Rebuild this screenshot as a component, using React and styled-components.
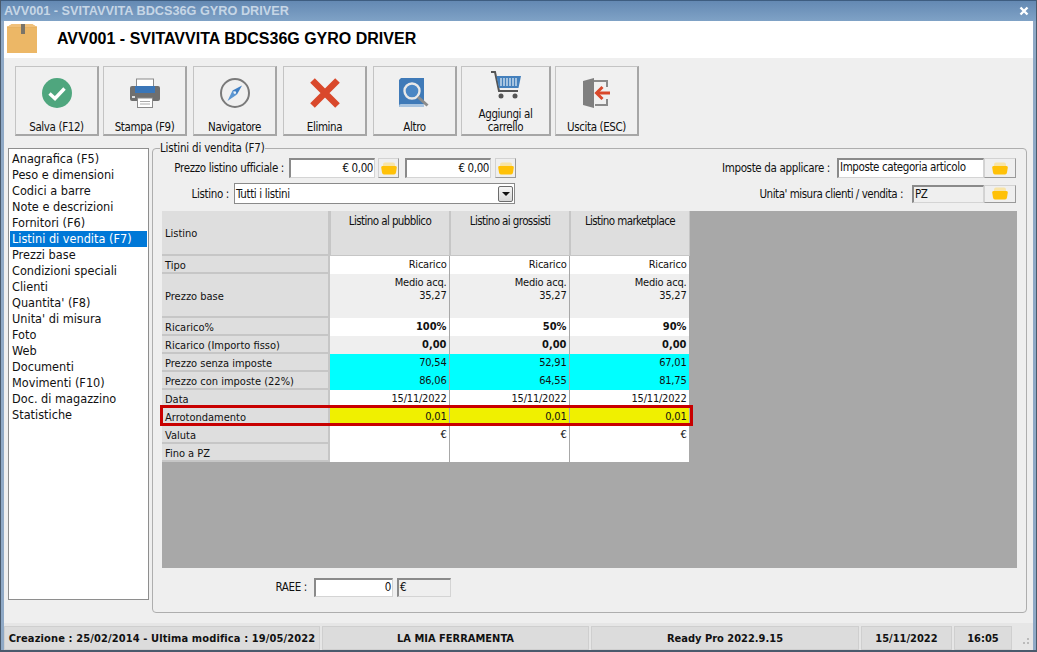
import React from "react";
import styled, { createGlobalStyle } from "styled-components";

const Global = createGlobalStyle`
  html, body { margin: 0; padding: 0; background: #efefef; }
  body { font-family: "DejaVu Sans Condensed", "DejaVu Sans", sans-serif; font-size: 11px; color: #111; }
`;

const FONT_BOLD = `"Liberation Sans", Arial, sans-serif`;

const Win = styled.div`
  width: 1037px;
  height: 652px;
  box-sizing: border-box;
  display: flex;
  flex-direction: column;
  background: #efefef;
  border: 1px solid #4a5a6c;
  border-top: none;
  border-bottom-width: 2px;
  overflow: hidden;
`;

const Shell = styled.div`
  flex: 1;
  min-height: 0;
  display: flex;
  flex-direction: column;
  background: #efefef;
  border-left: 3px solid #8fa9c6;
  border-right: 3px solid #8fa9c6;
`;

const TitleBar = styled.div`
  height: 21px;
  flex: none;
  margin: 0 -3px;
  padding: 0 4px 0 3px;
  display: flex;
  align-items: center;
  justify-content: space-between;
  background: linear-gradient(#6489b3, #7fa2c6);
  border-top: 1px solid #3e5d80;
  box-sizing: border-box;
  color: #c6d6e6;
  font: bold 12.7px ${FONT_BOLD};
`;

const CloseBtn = styled.span`
  width: 10px;
  height: 10px;
  margin-right: 3px;
  display: flex;
`;

const Header = styled.div`
  height: 37px;
  flex: none;
  display: flex;
  align-items: center;
  background: #fff;
  padding: 0 0 2px 3px;
  box-sizing: border-box;
  gap: 20px;
  font: bold 16px ${FONT_BOLD};
  color: #000;
`;

const BoxIcon = styled.svg`
  width: 30px;
  height: 33px;
  flex: none;
  align-self: flex-start;
`;

const Toolbar = styled.div`
  flex: none;
  display: flex;
  padding: 8px 0 0 11px;
  height: 70px;
`;

const ToolBtn = styled.div`
  width: ${(p) => p.$w || 84}px;
  height: 70px;
  margin-right: ${(p) => p.$gap}px;
  box-sizing: border-box;
  background: #f0f0f0;
  border: 1px solid #c4c4c4;
  border-bottom: 2px solid #a6a6a6;
  border-right: 2px solid #a6a6a6;
  display: flex;
  flex-direction: column;
  align-items: center;
  position: relative;
`;

const ToolIcon = styled.svg`
  width: 32px;
  height: 32px;
  margin-top: ${(p) => p.$top ?? 10}px;
  flex: none;
`;

const ToolLabel = styled.div`
  position: absolute;
  left: 0;
  right: 0;
  bottom: 0;
  text-align: center;
  line-height: 13px;
  font-size: 11.5px;
  letter-spacing: -0.38px;
`;

const Content = styled.div`
  flex: 1;
  display: flex;
  min-height: 0;
  padding: 5px 6px 0 4px;
  gap: 3px;
`;

const SideList = styled.div`
  width: 141px;
  height: 452px;
  margin-top: 7px;
  box-sizing: border-box;
  flex: none;
  background: #fff;
  border: 1px solid #8e8e8e;
  padding: 2px 1px;
  font-size: 12.6px;
`;

const SideItem = styled.div`
  height: 16px;
  line-height: 16px;
  padding-left: 2px;
  background: ${(p) => (p.$active ? "#0078d7" : "transparent")};
  color: ${(p) => (p.$active ? "#fff" : "#111")};
`;

const Group = styled.fieldset`
  flex: 1;
  margin: 0;
  height: 472px;
  box-sizing: border-box;
  border: 1px solid #aeaeae;
  border-radius: 4px;
  padding: 0 9px 0 9px;
  min-width: 0;
`;

const Legend = styled.legend`
  padding: 0;
  margin-left: -2px;
  font-size: 11.5px;
  line-height: 14px;
  letter-spacing: -0.2px;
`;

const FormRow = styled.div`
  display: flex;
  align-items: center;
  height: ${(p) => p.$h}px;
  margin-top: ${(p) => p.$top || 0}px;
`;

const FormLabel = styled.div`
  width: ${(p) => p.$w}px;
  text-align: right;
  flex: none;
  padding-right: ${(p) => p.$pad || 5}px;
  box-sizing: border-box;
  font-size: 11.5px;
  letter-spacing: ${(p) => p.$ls ?? -0.35}px;
  white-space: nowrap;
`;

const Input = styled.div`
  width: ${(p) => p.$w}px;
  height: ${(p) => p.$h || 20}px;
  flex: none;
  box-sizing: border-box;
  background: ${(p) => (p.$off ? "#efefef" : "#fff")};
  border: 2px solid #d4d4d4;
  border-top-color: #8a8a8a;
  border-left-color: #8a8a8a;
  border-bottom-width: 1px;
  border-right-width: 1px;
  text-align: ${(p) => (p.$left ? "left" : "right")};
  padding: 0 1px;
  line-height: ${(p) => p.$lh || 16}px;
  font-size: 11.5px;
  letter-spacing: -0.4px;
  margin-left: ${(p) => p.$ml || 0}px;
  overflow: hidden;
  white-space: nowrap;
`;

const FolderBtn = styled.div`
  width: ${(p) => p.$w || 21}px;
  height: ${(p) => p.$h || 20}px;
  flex: none;
  box-sizing: border-box;
  background: #efefef;
  border: 1px solid #d2d2d2;
  border-right: 1px solid #9a9a9a;
  border-bottom: 1px solid #9a9a9a;
  margin-left: ${(p) => p.$ml || 0}px;
  display: flex;
  align-items: center;
  justify-content: center;
`;

const Select = styled.div`
  width: 281px;
  height: 21px;
  flex: none;
  box-sizing: border-box;
  background: #fff;
  border: 1px solid #8a8a8a;
  display: flex;
  align-items: center;
  justify-content: space-between;
  padding: 0 1px;
  font-size: 11.5px;
  letter-spacing: -0.35px;
`;

const ArrowBtn = styled.div`
  width: 15px;
  height: 16px;
  box-sizing: border-box;
  background: linear-gradient(#f6f6f6, #d8d8d8);
  border: 1px solid #6c6c6c;
  border-radius: 2px;
  display: flex;
  align-items: center;
  justify-content: center;
  &::after {
    content: "";
    border-left: 4px solid transparent;
    border-right: 4px solid transparent;
    border-top: 4px solid #111;
  }
`;

const GridArea = styled.div`
  margin-top: 7px;
  height: 357px;
  background: #a8a8a8;
  position: relative;
`;

const Table = styled.div`
  width: 528px;
  display: grid;
  grid-template-columns: 168px 120px 120px 120px;
  grid-template-rows: 45px 18px 44px repeat(8, 18px);
`;

const LabelCell = styled.div`
  box-sizing: border-box;
  background: #dedede;
  border-bottom: 2px solid #c6c6c6;
  border-right: 2px solid #c6c6c6;
  padding: 2px 0 0 3px;
  display: flex;
  align-items: center;
  font-size: 11px;
`;

const HeadCell = styled.div`
  box-sizing: border-box;
  background: #dedede;
  border-bottom: 1px solid #c6c6c6;
  border-left: 1px solid #c6c6c6;
  border-right: 1px solid #c6c6c6;
  text-align: center;
  padding-top: 3px;
  line-height: 14px;
  font-size: 11.5px;
  letter-spacing: -0.6px;
`;

const DataCell = styled.div`
  box-sizing: border-box;
  background: ${(p) => p.$bg};
  border-right: 1px solid #a8a8a8;
  text-align: right;
  padding: 2px 2.500px 0 0;
  line-height: 13px;
  font-size: 11px;
  letter-spacing: ${(p) => (p.$bold ? "0" : "-0.2px")};
  font-weight: ${(p) => (p.$bold ? "bold" : "normal")};
  white-space: pre-line;
`;

const RedMark = styled.div`
  position: absolute;
  left: -2px;
  top: 194px;
  width: 533px;
  height: 21px;
  box-sizing: border-box;
  border: 3px solid #c80000;
  pointer-events: none;
`;

const RaeeRow = styled.div`
  display: flex;
  align-items: center;
  height: 20px;
  margin-top: 9px;
  padding-left: 100px;
`;

const StatusBar = styled.div`
  flex: none;
  height: 27px;
  margin-top: 9px;
  display: flex;
  gap: 2px;
  background: #e6e6e6;
  padding-top: 3px;
  box-sizing: border-box;
`;

const StatusCell = styled.div`
  width: ${(p) => p.$w}px;
  box-sizing: border-box;
  background: #dcdcdc;
  border: 1px solid #cfcfcf;
  display: flex;
  align-items: center;
  justify-content: center;
  font-size: 11px;
  font-weight: bold;
  white-space: nowrap;
  letter-spacing: ${(p) => p.$ls || 0}px;
`;

const Grip = styled.svg`
  width: 10px;
  height: 10px;
  margin: 11px 0 0 6px;
`;

const Folder = () => (
  <svg width="16" height="13" viewBox="0 0 16 13">
    <path d="M2 2.500Q2 .5 4 .5h8q2 0 2 2V5H2z" fill="#f8e4a6" />
    <path d="M1.500 4h13q1.500 0 1.300 1.500l-.8 5q-.3 2-2 2H3q-1.700 0-2-2l-.8-5Q0 4 1.500 4z" fill="#ffc107" />
  </svg>
);

const lists = [
  "Anagrafica (F5)", "Peso e dimensioni", "Codici a barre", "Note e descrizioni", "Fornitori (F6)",
  "Listini di vendita (F7)", "Prezzi base", "Condizioni speciali", "Clienti", "Quantita' (F8)",
  "Unita' di misura", "Foto", "Web", "Documenti", "Movimenti (F10)", "Doc. di magazzino", "Statistiche",
];

const W = "#fff", G = "#efefef", C = "#00ffff", Y = "#f0f000";

const rows = [
  { label: "Tipo", bg: W, vals: ["Ricarico", "Ricarico", "Ricarico"] },
  { label: "Prezzo base", bg: G, vals: ["Medio acq.\n35,27", "Medio acq.\n35,27", "Medio acq.\n35,27"] },
  { label: "Ricarico%", bg: W, bold: true, vals: ["100%", "50%", "90%"] },
  { label: "Ricarico (Importo fisso)", bg: G, bold: true, vals: ["0,00", "0,00", "0,00"] },
  { label: "Prezzo senza imposte", bg: C, vals: ["70,54", "52,91", "67,01"] },
  { label: "Prezzo con imposte (22%)", bg: C, vals: ["86,06", "64,55", "81,75"] },
  { label: "Data", bg: W, vals: ["15/11/2022", "15/11/2022", "15/11/2022"] },
  { label: "Arrotondamento", bg: Y, vals: ["0,01", "0,01", "0,01"] },
  { label: "Valuta", bg: W, vals: ["€", "€", "€"] },
  { label: "Fino a PZ", bg: W, vals: ["", "", ""] },
];

export default function App() {
  return (
    <>
      <Global />
      <Win>
        <Shell>
          <TitleBar>
            <span>AVV001 - SVITAVVITA BDCS36G GYRO DRIVER</span>
            <CloseBtn>
              <svg width="10" height="10" viewBox="0 0 10 10">
                <path d="M1.500 1.500l7 7M8.500 1.500l-7 7" stroke="#fff" strokeWidth="2.400" />
              </svg>
            </CloseBtn>
          </TitleBar>
          <Header>
            <BoxIcon viewBox="0 0 30 33">
              <path d="M0 6l5-3h20l5 3v26H0z" fill="#ecb766" />
              <path d="M0 6h30" stroke="#e2ad5e" strokeWidth="1" />
              <path d="M5 3h20l5 3H0z" fill="#f0c07a" />
              <rect x="14" y="3" width="4" height="10" fill="#7a7468" />
            </BoxIcon>
            <span>AVV001 - SVITAVVITA BDCS36G GYRO DRIVER</span>
          </Header>
          <Toolbar>
            <ToolBtn $gap={4}>
              <ToolIcon viewBox="0 0 32 32">
                <circle cx="16" cy="16" r="15" fill="#4fa67e" />
                <path d="M8.500 16.500l5.500 5 9.500-10" fill="none" stroke="#fff" strokeWidth="3.400" />
              </ToolIcon>
              <ToolLabel>Salva (F12)</ToolLabel>
            </ToolBtn>
            <ToolBtn $gap={6}>
              <ToolIcon viewBox="0 0 32 32">
                <rect x="7.500" y="2" width="17" height="9" fill="#fff" stroke="#8a8a8a" />
                <path d="M3 9h26q2 0 2 2v11q0 2-2 2H3q-2 0-2-2V11q0-2 2-2z" fill="#6f6f6f" />
                <rect x="6" y="9" width="20" height="7" fill="#3a76b8" />
                <rect x="3" y="19" width="3" height="2" fill="#ddd" />
                <rect x="8.500" y="21" width="15" height="9.500" fill="#fff" stroke="#8a8a8a" />
                <path d="M11 24.500h10M11 27h10" stroke="#aaa" />
              </ToolIcon>
              <ToolLabel>Stampa (F9)</ToolLabel>
            </ToolBtn>
            <ToolBtn $gap={6}>
              <ToolIcon viewBox="0 0 32 32">
                <circle cx="16" cy="16" r="14" fill="#f0f0f0" stroke="#7a7a7a" strokeWidth="2" />
                <path d="M23 8.500l-9.500 5 4.500 4z" fill="#3f7fc4" />
                <path d="M8.500 24l5-10.500 4.500 4z" fill="#5c96d2" />
                <circle cx="15.800" cy="15.600" r="1.300" fill="#e8f0f8" />
              </ToolIcon>
              <ToolLabel>Navigatore</ToolLabel>
            </ToolBtn>
            <ToolBtn $gap={6}>
              <ToolIcon viewBox="0 0 32 32">
                <path d="M3.500 3.500l25 25M28.500 3.500l-25 25" stroke="#d9482b" strokeWidth="6.500" />
              </ToolIcon>
              <ToolLabel>Elimina</ToolLabel>
            </ToolBtn>
            <ToolBtn $gap={4}>
              <ToolIcon viewBox="0 0 32 32">
                <path d="M0 3l2-2h23v27H2l-2 2z" fill="#3f7ab8" />
                <path d="M0 29q0-2 2-2h23v3H2q-2 0-2-1z" fill="#a8c4e0" />
                <circle cx="13" cy="14" r="7.500" fill="#4a86c4" stroke="#e8e8e8" strokeWidth="2.400" />
                <path d="M19 20l9.500 8.500" stroke="#8c8c8c" strokeWidth="3" />
              </ToolIcon>
              <ToolLabel>Altro</ToolLabel>
            </ToolBtn>
            <ToolBtn $gap={4} $w={90}>
              <ToolIcon viewBox="0 0 32 32" $top={3}>
                <path d="M1 2h4l4 19h19" fill="none" stroke="#555" strokeWidth="2" />
                <path d="M6.500 6H31l-2.500 12H9z" fill="#4480bc" />
                <path d="M11 8v8M14 8v8M17 8v8M20 8v8M23 8v8M26 8v8" stroke="#cfe0f0" strokeWidth="1.400" />
                <circle cx="11" cy="26" r="2.500" fill="#555" />
                <circle cx="25" cy="26" r="2.500" fill="#555" />
              </ToolIcon>
              <ToolLabel>Aggiungi al<br />carrello</ToolLabel>
            </ToolBtn>
            <ToolBtn $gap={0}>
              <ToolIcon viewBox="0 0 32 32">
                <path d="M12 4h14v6M26 22v6H14" fill="none" stroke="#8a8a8a" strokeWidth="2" />
                <path d="M2 4l11-3v30L2 28z" fill="#7f7f7f" />
                <path d="M29 16H17" stroke="#d9482b" strokeWidth="3" />
                <path d="M21.500 10l-6 6 6 6" fill="none" stroke="#d9482b" strokeWidth="3" />
              </ToolIcon>
              <ToolLabel>Uscita (ESC)</ToolLabel>
            </ToolBtn>
          </Toolbar>
          <Content>
            <SideList>
              {lists.map((l) => (
                <SideItem key={l} $active={l.startsWith("Listini")}>{l}</SideItem>
              ))}
            </SideList>
            <Group>
              <Legend>Listini di vendita (F7)</Legend>
              <FormRow $h={20} $top={3}>
                <FormLabel $w={127}>Prezzo listino ufficiale :</FormLabel>
                <Input $w={86}>€ 0,00</Input>
                <FolderBtn $ml={3}><Folder /></FolderBtn>
                <Input $w={86} $ml={6}>€ 0,00</Input>
                <FolderBtn $ml={4}><Folder /></FolderBtn>
                <FormLabel $w={321} $pad={7}>Imposte da applicare :</FormLabel>
                <Input $w={147} $left $lh={14}>Imposte categoria articolo</Input>
                <FolderBtn $w={32}><Folder /></FolderBtn>
              </FormRow>
              <FormRow $h={21} $top={5}>
                <FormLabel $w={72}>Listino :</FormLabel>
                <Select>
                  <span>Tutti i listini</span>
                  <ArrowBtn />
                </Select>
                <FormLabel $w={397} $pad={9} $ls={-0.48}>Unita' misura clienti / vendita :</FormLabel>
                <Input $w={72} $h={18} $off $left $lh={15}>PZ</Input>
                <FolderBtn $w={32} $h={18}><Folder /></FolderBtn>
              </FormRow>
              <GridArea>
                <Table>
                  <LabelCell>Listino</LabelCell>
                  <HeadCell>Listino al pubblico</HeadCell>
                  <HeadCell>Listino ai grossisti</HeadCell>
                  <HeadCell>Listino marketplace</HeadCell>
                  {rows.map((r) => (
                    <React.Fragment key={r.label}>
                      <LabelCell>{r.label}</LabelCell>
                      {r.vals.map((v, i) => (
                        <DataCell key={i} $bg={r.bg} $bold={r.bold}>{v}</DataCell>
                      ))}
                    </React.Fragment>
                  ))}
                </Table>
                <RedMark />
              </GridArea>
              <RaeeRow>
                <FormLabel $w={52} $pad={7}>RAEE :</FormLabel>
                <Input $w={79} $h={19} $lh={15}>0</Input>
                <Input $w={54} $h={19} $ml={4} $off $left $lh={15}>€</Input>
              </RaeeRow>
            </Group>
          </Content>
          <StatusBar>
            <StatusCell $w={316} $ls={0.12}>Creazione : 25/02/2014 - Ultima modifica : 19/05/2022</StatusCell>
            <StatusCell $w={267}>LA MIA FERRAMENTA</StatusCell>
            <StatusCell $w={268}>Ready Pro 2022.9.15</StatusCell>
            <StatusCell $w={91}>15/11/2022</StatusCell>
            <StatusCell $w={58}>16:05</StatusCell>
            <Grip viewBox="0 0 10 10">
              <path d="M7 1h2v2H7zM3 5h2v2H3zM7 5h2v2H7z" fill="#bbb" />
            </Grip>
          </StatusBar>
        </Shell>
      </Win>
    </>
  );
}
